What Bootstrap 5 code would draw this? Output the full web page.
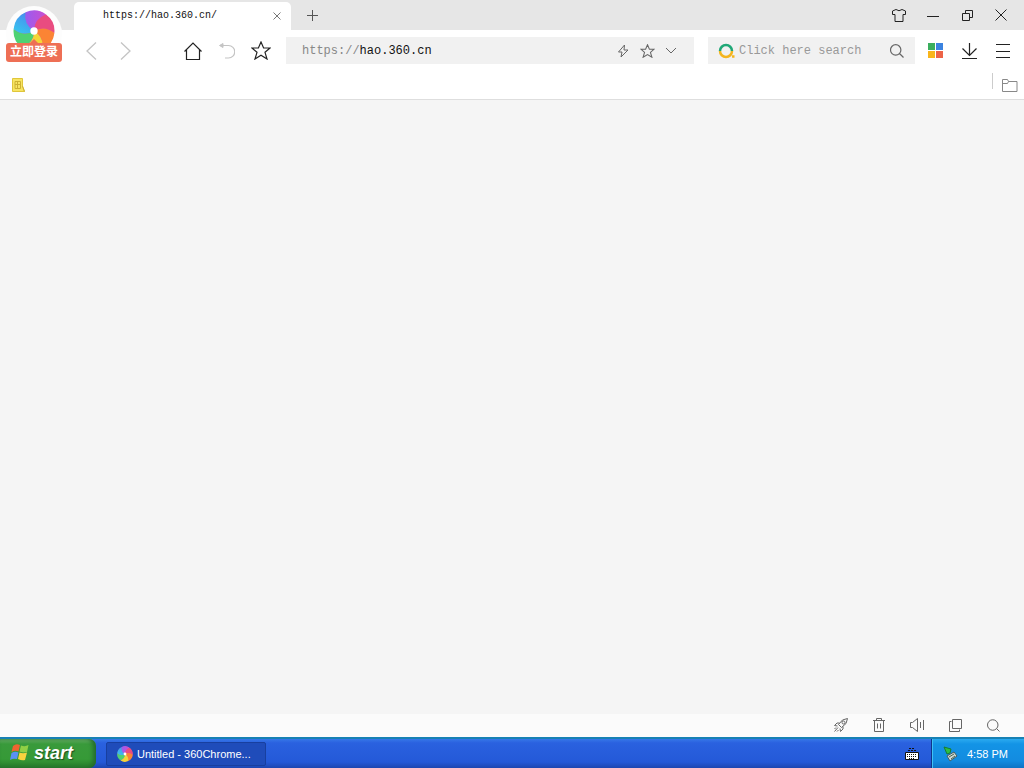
<!DOCTYPE html>
<html lang="en">
<head>
<meta charset="utf-8">
<meta name="viewport" content="width=device-width, initial-scale=1">
<title>360Chrome</title>
<link href="https://cdn.jsdelivr.net/npm/bootstrap@5.3.0/dist/css/bootstrap.min.css" rel="stylesheet">
<style>
body{font-family:"Liberation Sans","Noto Sans CJK SC",sans-serif;background:#f5f5f5;color:#222}
svg{display:block;fill:none;stroke:currentColor}
.mono{font-family:"Liberation Mono","Noto Sans CJK SC",monospace;font-size:12px;line-height:16px}
.tool{width:34px;height:28px;padding:0;border:0;background:none;color:#222;display:flex;align-items:center;justify-content:center;flex:none}
.tool.pale{color:#c4c4c4}
.tabstrip{height:30px;background:#e6e6e6;padding-left:74px;padding-right:6px}
.page-tab{width:217px;height:28px;background:#fff;border-radius:5px 5px 0 0;padding-left:29px}
.page-tab a{font-size:10px;color:#111}
.page-tab .tool{width:28px;color:#777}
.toolbar{height:41px;padding-left:74px;padding-right:4px}
.field{height:27px;background:#f1f1f1}
.field input{border:0;background:none;outline:0;padding:0;min-width:0;color:#111}
.field .tool{width:24px;color:#666}
.address{margin-left:8px;margin-right:14px;padding-left:16px;padding-right:11px}
.address label{color:#888}
.search{width:207px;margin-right:3px;padding-left:10px;padding-right:6px}
.search input::placeholder{color:#999;opacity:1}
.account{left:6px;top:6px;width:56px;height:56px;padding:0;border:0;background:none;z-index:2}
.disc{width:56px;height:56px;border-radius:50%;background:#fdfdfd}
.login{left:0;right:0;bottom:0;height:19px;border-radius:3px;background:#ee6f55;color:#fff;font:bold 12px/19px "Liberation Sans","Noto Sans CJK SC",sans-serif}
.login::before{content:"";position:absolute;left:50%;bottom:100%;margin-left:-4px;border:4px solid transparent;border-top:0;border-bottom-color:#ee6f55}
.bookmarks{height:29px;border-bottom:1px solid #dedede;padding-left:12px;padding-right:6px}
.rule{width:1px;height:16px;background:#ccc;margin-bottom:8px;margin-right:9px}
.statusbar{height:23px;background:#fbfbfb;padding-right:12px}
.statusbar .tool{width:38px;height:22px;color:#666}
.taskbar{height:31px;border-top:2px solid #1781b4;background:linear-gradient(#3677e8,#2a61df 4px,#2459d8 23px,#1d46b0);font:11px/16px "Liberation Sans",sans-serif;color:#fff}
.start{width:96px;padding:0 0 2px 10px;border:0;border-radius:0 7px 7px 0;background:linear-gradient(#6db56b,#399a3b 5px,#369a37 20px,#277a2a);box-shadow:inset -3px 0 4px #246b2d;color:#fff;font:italic bold 18px/24px "Liberation Sans",sans-serif;text-shadow:1px 1px 1px #1e4e20}
.task{width:160px;margin:3px 0 2px 10px;padding:0 0 0 10px;border:1px solid #183f9f;border-radius:2px;background:#1f4cba;color:#fff;font:inherit}
.tray{width:93px;padding-left:11px;border-left:1px solid #10358a;box-shadow:inset 1px 0 #3fc3f5;background:linear-gradient(#2baaf0,#1394e6 5px,#138be0 22px,#0f73c4)}
</style>
</head>
<body>
<svg class="position-absolute" width="0" height="0" aria-hidden="true">
  <defs>
    <linearGradient id="violet" x1="0" x2="1"><stop stop-color="#9a5cf0"/><stop offset="1" stop-color="#c94fd0"/></linearGradient>
    <linearGradient id="azure" x1="0" x2="1"><stop stop-color="#37c3ee"/><stop offset="1" stop-color="#4a8bf0"/></linearGradient>
    <path id="blade" d="M20 20Q10 14 12 2.200A19.500 19.500 0 0 1 31.400 4.200Q20.200 8.300 20 20"/>
  </defs>
  <symbol id="wheel" viewBox="0 0 40 40">
    <g stroke="none">
      <circle cx="20" cy="20" r="19" fill="#d74cb4"/>
      <use href="#blade" fill="url(#violet)"/>
      <use href="#blade" fill="#e94c80" transform="rotate(60 20 20)"/>
      <use href="#blade" fill="#fb8434" transform="rotate(120 20 20)"/>
      <use href="#blade" fill="#f3d637" transform="rotate(180 20 20)"/>
      <use href="#blade" fill="#4ed272" transform="rotate(240 20 20)"/>
      <use href="#blade" fill="url(#azure)" transform="rotate(300 20 20)"/>
      <circle cx="20" cy="20" r="3.500" fill="#fff"/>
    </g>
  </symbol>
</svg>
<div class="d-flex flex-column min-vh-100 position-relative">
  <button class="account position-absolute" type="button">
    <span class="disc d-flex justify-content-center"><svg class="mt-1" width="42" height="42"><use href="#wheel"/></svg></span>
    <span class="login position-absolute">立即登录</span>
  </button>

  <header class="bg-white">
    <div class="tabstrip d-flex align-items-center">
      <div class="page-tab d-flex align-items-center align-self-end">
        <a class="mono text-decoration-none flex-grow-1" href="#page">https://hao.360.cn/</a>
        <button class="tool" type="button" aria-label="Close tab"><svg width="8" height="8"><path d="M.5.5l7 7M7.5.5l-7 7"/></svg></button>
      </div>
      <button class="tool me-auto ms-1" type="button" aria-label="New tab"><svg width="11" height="11"><path stroke="#555" d="M5.5 0v11M0 5.500h11"/></svg></button>
      <button class="tool" type="button" aria-label="Skins"><svg width="14" height="13"><path d="M4 .5L.5 2v3.500H3v7h8v-7h2.500V2L10 .5Q7 3 4 .5z"/></svg></button>
      <button class="tool" type="button" aria-label="Minimize"><svg width="12" height="11"><path d="M0 6.500h12"/></svg></button>
      <button class="tool" type="button" aria-label="Restore"><svg width="11" height="11"><path d="M.5 3.500h7v7h-7zM3.500 3V.5h7v7H8"/></svg></button>
      <button class="tool" type="button" aria-label="Close"><svg width="12" height="12"><path d="M.5.5l11 11M11.500.5l-11 11"/></svg></button>
    </div>

    <nav class="toolbar d-flex align-items-center" aria-label="Browser">
      <button class="tool pale" type="button" aria-label="Back"><svg width="11" height="18"><path stroke-width="1.300" d="M10 .5L1 9l9 8.500"/></svg></button>
      <button class="tool pale" type="button" aria-label="Forward"><svg width="11" height="18"><path stroke-width="1.300" d="M1 .5L10 9l-9 8.500"/></svg></button>
      <span class="tool"></span>
      <button class="tool" type="button" aria-label="Home"><svg width="18" height="18"><path stroke-width="1.200" d="M.5 9.500L9 1l8.500 8.500M2.500 8v9.500h13V8"/></svg></button>
      <button class="tool pale" type="button" aria-label="Undo"><svg width="16" height="16"><path fill="currentColor" d="M4 .5v4L.5 2.500z"/><path stroke-width="1.200" d="M1 2.500h8.500a6 6 0 0 1 0 12.500H6"/></svg></button>
      <button class="tool" type="button" aria-label="Favorites"><svg width="20" height="19"><path stroke-width="1.200" d="M10 1l2.600 6H19l-5 4.300 2 6.700-6-3.700L4 18l2-6.700L1 7h6.400z"/></svg></button>

      <div class="address field d-flex align-items-center flex-grow-1">
        <label class="mono" for="url">https://</label>
        <input class="mono flex-grow-1" id="url" type="text" value="hao.360.cn">
        <button class="tool" type="button" aria-label="Speed mode"><svg width="12" height="14"><path d="M7.500 1l-6 7H5l-1 5 7-7H7z"/></svg></button>
        <button class="tool" type="button" aria-label="Add bookmark"><svg width="15" height="14" viewBox="0 0 20 19"><path stroke-width="1.400" d="M10 1l2.600 6H19l-5 4.300 2 6.700-6-3.700L4 18l2-6.700L1 7h6.400z"/></svg></button>
        <button class="tool" type="button" aria-label="History"><svg width="12" height="7"><path d="M1 1l5 5 5-5"/></svg></button>
      </div>

      <div class="search field d-flex align-items-center">
        <svg class="flex-shrink-0" width="17" height="16"><path stroke="#20a877" stroke-width="2.500" d="M2 8a6 6 0 0 1 12 0"/><path stroke="#f4b51f" stroke-width="2.500" d="M2 8a6 6 0 0 0 12 0M14 13.500h2.500"/></svg>
        <input class="mono ms-1 flex-grow-1" type="search" placeholder="Click here search" aria-label="Search">
        <button class="tool" type="button" aria-label="Search"><svg width="14" height="14"><path stroke-width="1.200" d="M10.900 5.900a5.200 5.200 0 1 1-10.400 0a5.200 5.200 0 0 1 10.400 0M9.500 9.500l4 4"/></svg></button>
      </div>

      <button class="tool" type="button" aria-label="Apps"><svg width="15" height="15"><g stroke="none"><path fill="#3aae5d" d="M0 0h7v7H0z"/><path fill="#3b83e0" d="M8 0h7v7H8z"/><path fill="#f9b51b" d="M0 8h7v7H0z"/><path fill="#ed6347" d="M8 8h7v7H8z"/></g></svg></button>
      <button class="tool" type="button" aria-label="Downloads"><svg width="15" height="16"><path stroke-width="1.200" d="M7.500 0v12M.5 5.500l7 7 7-7M0 15.500h15"/></svg></button>
      <button class="tool" type="button" aria-label="Menu"><svg width="14" height="14"><path d="M0 .5h14M0 7.500h14M0 13.500h14"/></svg></button>
    </nav>

    <div class="bookmarks d-flex align-items-center">
      <button class="tool w-auto me-auto" type="button" aria-label="Bookmark"><svg width="13" height="14"><path fill="#f7e462" stroke="#e0c63a" d="M.5.5h10v8l2 5H.5z"/><path stroke="#cdb032" d="M3 3.500h5.500v7H3zM3 6.500h5M5.500 4v6M10.500 8l2 5.500"/></svg></button>
      <span class="rule"></span>
      <button class="tool w-auto" type="button" aria-label="Bookmark folder"><svg width="16" height="13"><path stroke="#888" d="M.5 12.500V.5h5l1 2h8.500v10zM.5 4.500h5l1-2"/></svg></button>
    </div>
  </header>

  <main class="flex-grow-1" id="page"></main>

  <footer>
    <div class="statusbar d-flex align-items-start justify-content-end">
      <button class="tool" type="button" aria-label="Boost"><svg width="14" height="14"><path d="M13.500.5Q8 .5 4.500 6.500l3 3Q13.500 6 13.500.5zM5.500 5H3L.5 7.500l3 .5M9 8.500V11l-2.500 2.500-.5-3M4 9.500l-3.500 4M2 9.500L.5 11M4.500 12L3 13.500"/><circle cx="9.500" cy="4.500" r="1.500"/></svg></button>
      <button class="tool" type="button" aria-label="Clean up"><svg width="12" height="14"><path d="M0 2.500h12M3.500 2V.5h5V2M1.500 3v10.500h9V3M4.500 5.500v5M7.500 5.500v5"/></svg></button>
      <button class="tool" type="button" aria-label="Sound"><svg width="14" height="14"><path d="M.5 4.500h2l5-4v13l-5-4h-2zM10.500 4v6M13.500 2v10"/></svg></button>
      <button class="tool" type="button" aria-label="Windows"><svg width="13" height="13"><path d="M3.500.5h9v9h-9zM2.500 2.500h-2v10h10v-2"/></svg></button>
      <button class="tool" type="button" aria-label="Zoom"><svg width="13" height="13"><path d="M11 6A5.200 5.200 0 1 1 .5 6A5.200 5.200 0 0 1 11 6M9.500 9.500l3 3"/></svg></button>
    </div>
    <div class="taskbar d-flex align-items-stretch">
      <button class="start d-flex align-items-center" type="button">
        <svg class="me-1" width="20" height="19"><g stroke="none"><path fill="#ef6430" d="M3 3Q6 0 10 2L8.500 8.500Q5 7 1.500 9z"/><path fill="#90cf45" d="M11 2.500Q15 4 18.500 2L17 9Q13 10 9.500 8.500z"/><path fill="#5a91f4" d="M1.500 10Q5 8 8.500 9.500L7 16Q3 15 0 17z"/><path fill="#f9d33e" d="M9.500 9.500Q13 11 17 9.500L15 17Q12 18 8 16z"/></g></svg>start
      </button>
      <button class="task d-flex align-items-center" type="button"><svg class="me-1 flex-shrink-0" width="16" height="16"><use href="#wheel"/></svg>Untitled - 360Chrome...</button>
      <span class="ms-auto me-2 pe-1 d-flex align-items-center"><svg width="14" height="13"><path stroke="#111" d="M3 3.500h8M4 1.500h6" stroke-dasharray="2 1"/><path fill="#fff" stroke="#111" d="M.5 5.500h13v7H.5z"/><path stroke="#111" stroke-dasharray="1 1" d="M2 7.500h10M2 9.500h10M4 11.500h6"/></svg></span>
      <div class="tray d-flex align-items-center">
        <svg class="me-2" width="16" height="16"><path fill="#2dbf42" stroke="#177b36" d="M1 1l7 2-1 4-3 1z"/><path fill="#d3d8d4" stroke="#435e63" d="M4 10l7-4 3 4-7 5z"/><path stroke="#465" d="M6 11l5-3M8 13l4-3"/></svg>
        <span>4:58 PM</span>
      </div>
    </div>
  </footer>
</div>
<script src="https://cdn.jsdelivr.net/npm/bootstrap@5.3.0/dist/js/bootstrap.bundle.min.js"></script>
</body>
</html>
